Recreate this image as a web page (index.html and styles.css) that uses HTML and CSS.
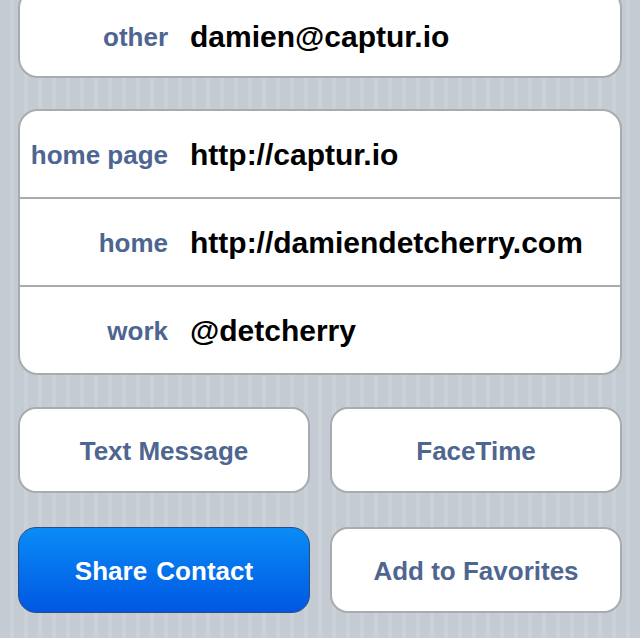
FILE: index.html
```html
<!DOCTYPE html>
<html>
<head>
<meta charset="utf-8">
<link rel="stylesheet" href="styles.css">
</head>
<body>
<div class="page">
  <div class="card card-top">
    <div class="row"><span class="label">other</span><span class="value">damien@captur.io</span></div>
  </div>
  <div class="card card-links">
    <div class="row"><span class="label">home page</span><span class="value">http://captur.io</span></div>
    <div class="row"><span class="label">home</span><span class="value">http://damiendetcherry.com</span></div>
    <div class="row"><span class="label">work</span><span class="value">@detcherry</span></div>
  </div>
  <div class="buttons buttons-first">
    <div class="btn">Text Message</div>
    <div class="btn">FaceTime</div>
  </div>
  <div class="buttons buttons-second">
    <div class="btn btn-primary">Share Contact</div>
    <div class="btn">Add to Favorites</div>
  </div>
</div>
</body>
</html>
```
FILE: styles.css
```css
html, body {
  margin: 0;
  padding: 0;
  height: 100%;
}
body {
  background: repeating-linear-gradient(90deg, #c5cbd3 0 10px, #cbd1d8 10px 14px);
  font-family: "Liberation Sans", Arial, Helvetica, sans-serif;
  font-weight: bold;
  overflow: hidden;
}
.page {
  padding: 0 18px;
}
.card {
  background: #fff;
  border: 2px solid #a9abae;
  border-radius: 20px;
}
.card-top {
  margin-top: -12px;
}
.card-top .row {
  box-sizing: border-box;
  padding-top: 6px;
}
.card-links {
  margin-top: 31px;
}
.row {
  display: grid;
  grid-template-columns: 148px 1fr;
  column-gap: 22px;
  align-items: center;
  height: 86px;
}
.row + .row {
  border-top: 2px solid #a9abae;
}
.label {
  text-align: right;
  font-size: 26px;
  color: #4d6590;
  padding-top: 3px;
}
.value {
  font-size: 30px;
  color: #000;
  padding-top: 2px;
}
.buttons {
  display: grid;
  grid-template-columns: 1fr 1fr;
  column-gap: 20px;
}
.buttons-first {
  margin-top: 32px;
}
.buttons-second {
  margin-top: 34px;
}
.btn {
  box-sizing: border-box;
  height: 86px;
  padding-top: 2px;
  background: #fff;
  border: 2px solid #a9abae;
  border-radius: 18px;
  display: flex;
  align-items: center;
  justify-content: center;
  font-size: 26px;
  color: #4f6690;
}
.btn-primary {
  background: linear-gradient(180deg, #0a8cf6 0%, #0571ec 50%, #0057e2 100%);
  border: 1px solid #2b4c80;
  color: #fff;
  word-spacing: 2px;
}
```
